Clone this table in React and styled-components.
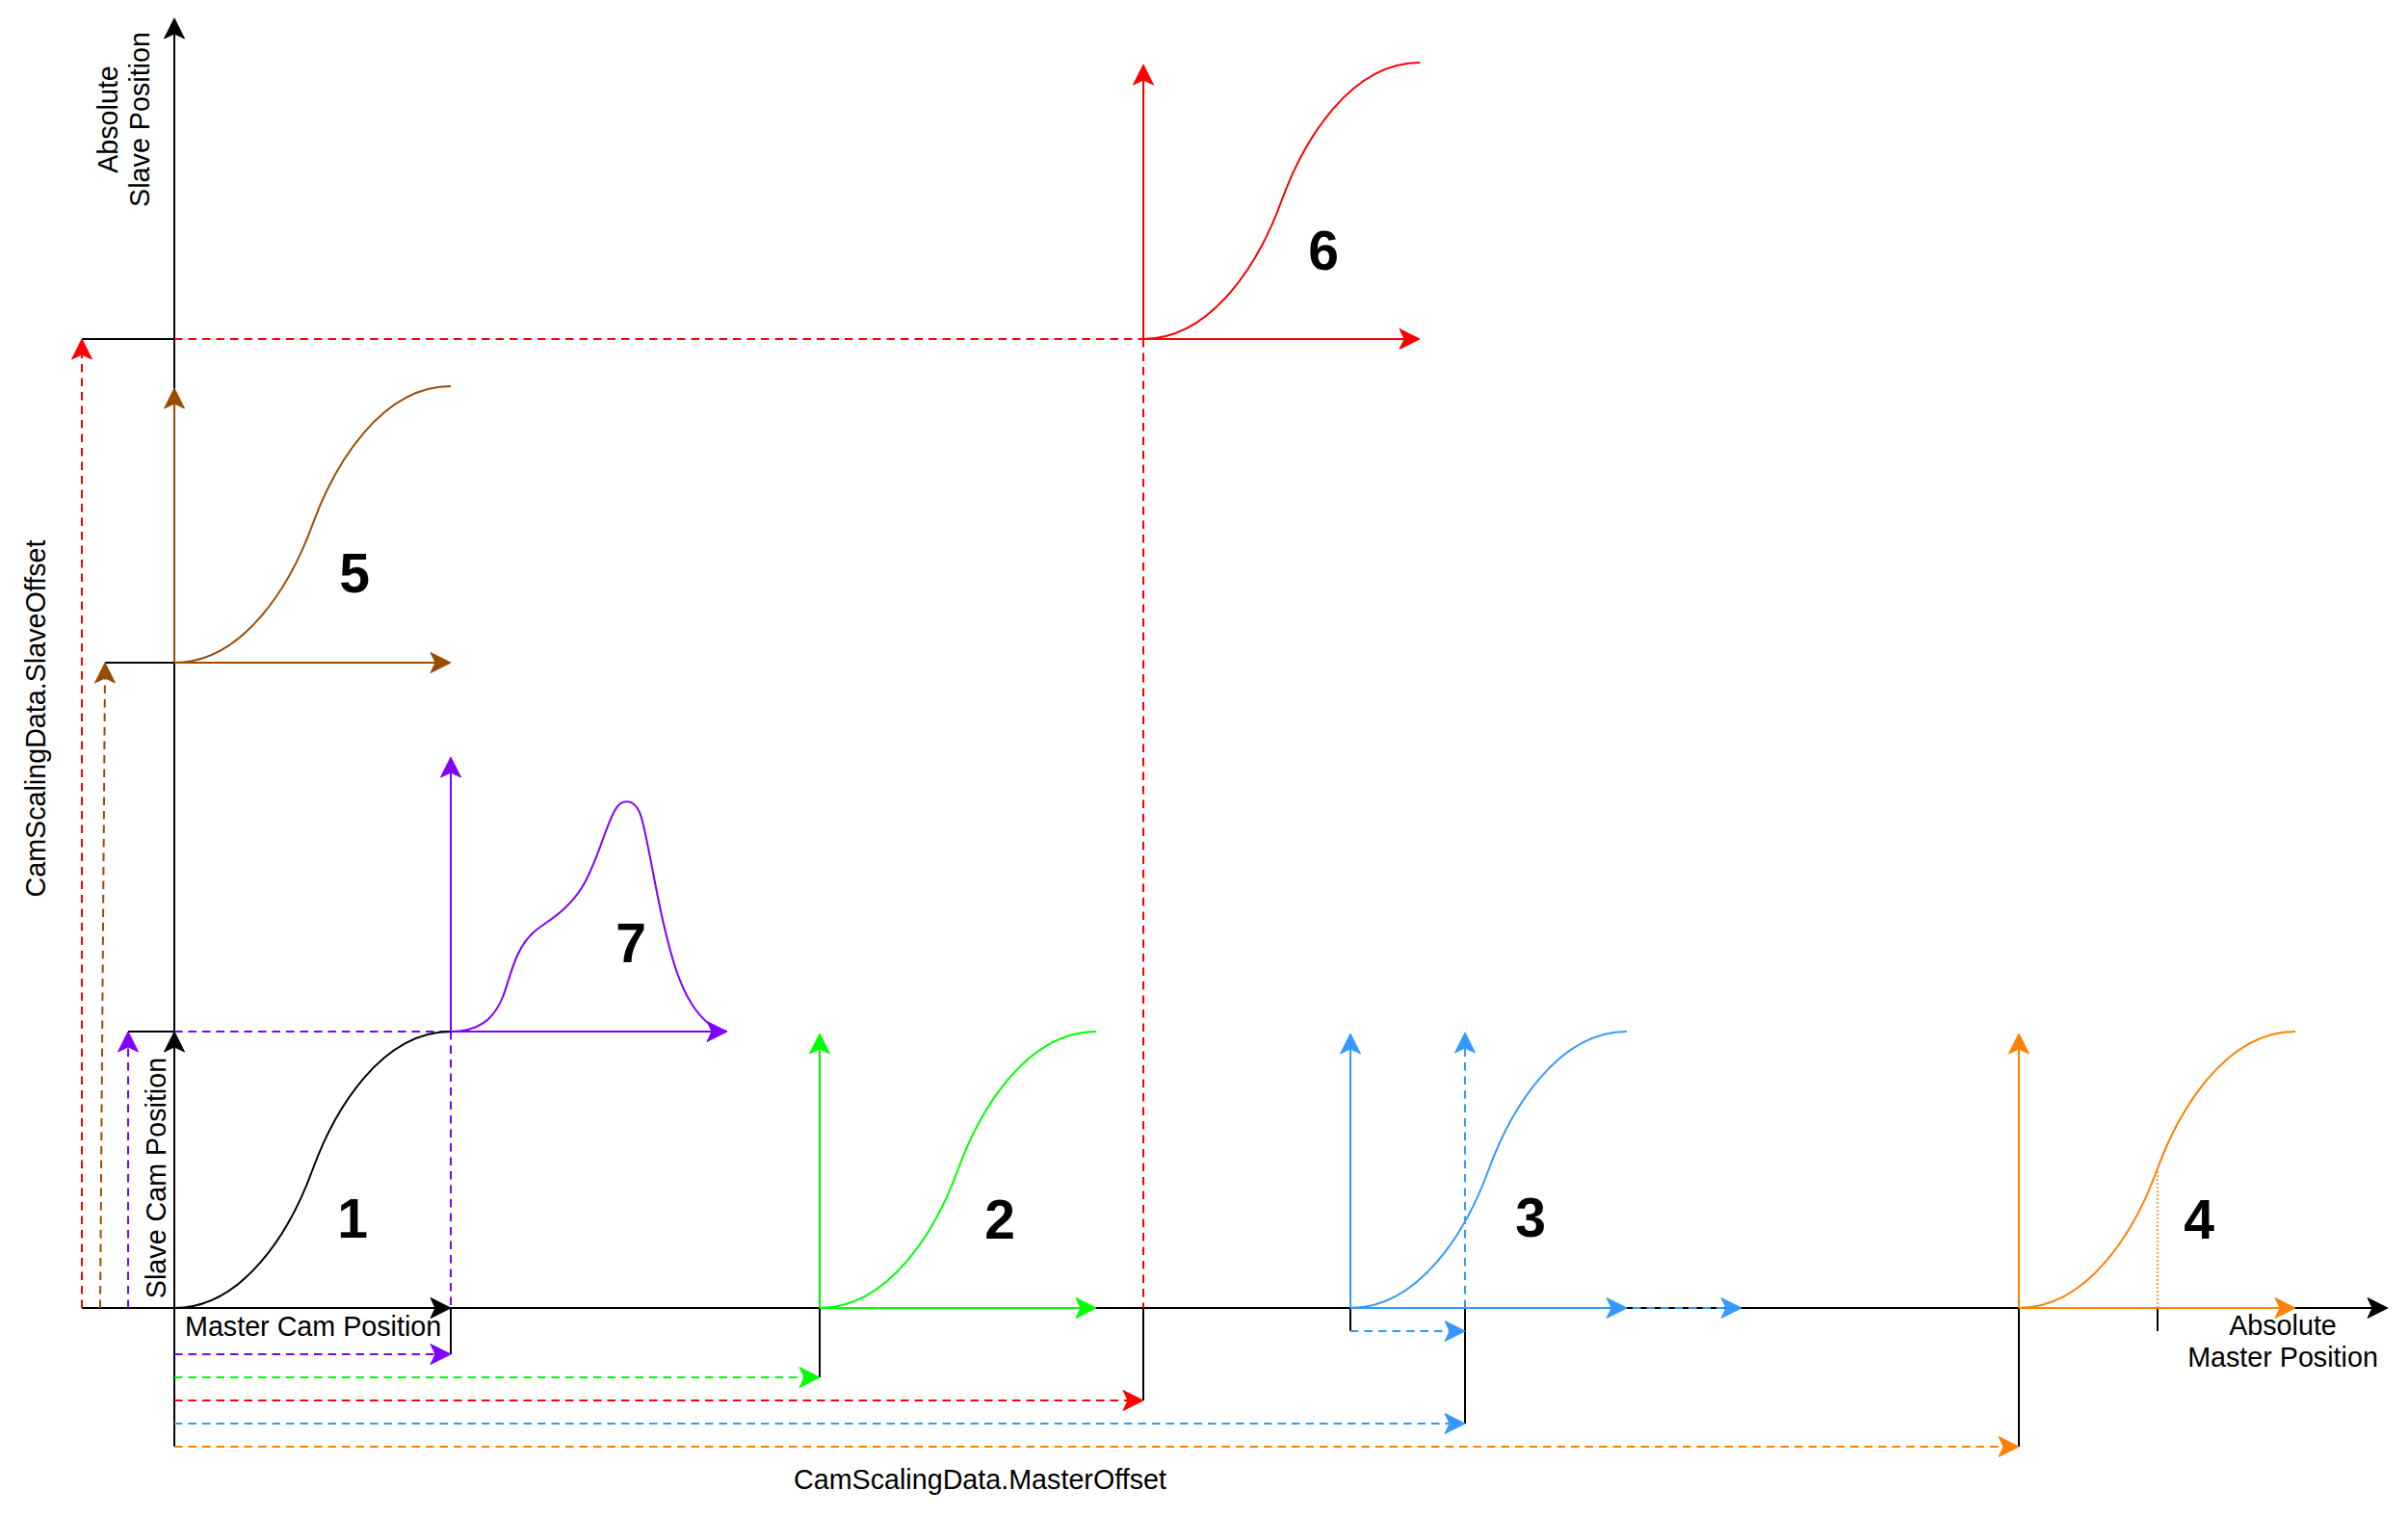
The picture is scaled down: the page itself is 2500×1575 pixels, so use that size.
import React from 'react';
import styled, { createGlobalStyle } from 'styled-components';

// colours of the seven cam cases (draw.io palette)
const BLACK = '#000000';
const RED = '#ff0000';
const GREEN = '#00ff00';
const BLUE = '#3399ff';
const ORANGE = '#ff8000';
const BROWN = '#994c00';
const PURPLE = '#7f00ff';

const DASH = '8.5 6';
const DOT = '2 2';

// every cam profile spans the same box
const CAM_W = 287;
const CAM_H = 287;

const GlobalStyle = createGlobalStyle`
  html, body {
    margin: 0;
    padding: 0;
    background: #ffffff;
  }
  body {
    font-family: 'Liberation Sans', Arial, sans-serif;
  }
`;

const Page = styled.div`
  width: 2500px;
  height: 1575px;
  background: #ffffff;
  overflow: hidden;
`;

const Diagram = styled.svg`
  display: block;
  width: 2500px;
  height: 1575px;
`;

const Label = styled.text`
  font-family: 'Liberation Sans', Arial, sans-serif;
  font-size: 28.7px;
  fill: #000000;
  text-anchor: ${(p) => p.$anchor || 'start'};
`;

const Numeral = styled.text`
  font-family: 'Liberation Sans', Arial, sans-serif;
  font-size: 57px;
  font-weight: 700;
  fill: #000000;
  text-anchor: middle;
`;

const Stroke = styled.path`
  fill: none;
  stroke: ${(p) => p.$color};
  stroke-width: ${(p) => p.$width || 2};
  stroke-dasharray: ${(p) => p.$dash || 'none'};
`;

const Head = styled.path`
  fill: ${(p) => p.$color};
  stroke: ${(p) => p.$color};
  stroke-width: 1;
  stroke-linejoin: miter;
`;

const HEADS = {
  right: 'M0,0 L-21,-10.5 L-16,0 L-21,10.5 Z',
  up: 'M0,0 L-10.5,21 L0,16 L10.5,21 Z',
};

const Arrowhead = ({ x, y, dir, color }) => (
  <Head d={HEADS[dir]} transform={`translate(${x},${y})`} $color={color} />
);

const Line = ({ from, to, color = BLACK, dash, width }) => (
  <Stroke d={`M${from[0]},${from[1]} L${to[0]},${to[1]}`} $color={color} $dash={dash} $width={width} />
);

// line ending in an arrowhead at `to`
const Arrow = ({ from, to, color = BLACK, dash }) => {
  const dir = to[1] === from[1] ? 'right' : 'up';
  const end = dir === 'right' ? [to[0] - 10, to[1]] : [to[0], to[1] + 10];
  return (
    <g>
      <Line from={from} to={end} color={color} dash={dash} />
      <Arrowhead x={to[0]} y={to[1]} dir={dir} color={color} />
    </g>
  );
};

const sCurve = (x, y, w = CAM_W, h = CAM_H) =>
  `M${x},${y} C${x + 0.25 * w},${y} ${x + 0.42 * w},${y - 0.28 * h} ${x + 0.5 * w},${y - 0.5 * h} ` +
  `C${x + 0.58 * w},${y - 0.72 * h} ${x + 0.75 * w},${y - h} ${x + w},${y - h}`;

const PEAK_CURVE =
  'M468,1071 C495,1071 512,1060 522,1035 C530,1015 534,985 555,967 C570,955 590,945 605,920 ' +
  'C620,895 628,860 638,842 C645,828 660,828 666,849 C672,870 680,920 688,955 ' +
  'C696,990 705,1025 722,1048 C732,1062 742,1069 755,1071';

// a cam profile drawn in its own little coordinate system
const CamPlot = ({ x, y, color, curve, axes = true }) => (
  <g>
    {axes && <Arrow from={[x, y]} to={[x, y - CAM_H + 2]} color={color} />}
    {axes && <Arrow from={[x, y]} to={[x + CAM_W, y]} color={color} />}
    <Stroke d={curve || sCurve(x, y)} $color={color} />
  </g>
);

const AXIS_Y = 1358;
const AXIS_X = 181;

// black stubs that drop from the master axis to each offset arrow
const DROPS = [
  [468, 1406],
  [851, 1430],
  [1187, 1454],
  [1402, 1382],
  [1521, 1478],
  [2096, 1502],
  [2240, 1382],
];

// offset arrows below the master axis
const MASTER_OFFSETS = [
  { y: 1406, x: 468, color: PURPLE },
  { y: 1430, x: 851, color: GREEN },
  { y: 1454, x: 1187, color: RED },
  { y: 1478, x: 1521, color: BLUE },
  { y: 1502, x: 2096, color: ORANGE },
];

const NUMERALS = [
  { n: '1', x: 366, y: 1264 },
  { n: '2', x: 1038, y: 1265 },
  { n: '3', x: 1589, y: 1263 },
  { n: '4', x: 2283, y: 1265 },
  { n: '5', x: 368, y: 594 },
  { n: '6', x: 1374, y: 259 },
  { n: '7', x: 655, y: 978 },
];

const Vertical = ({ x, y, children }) => (
  <Label x={0} y={0} $anchor="middle" transform={`translate(${x},${y}) rotate(-90)`}>
    {children}
  </Label>
);

const App = () => (
  <Page>
    <GlobalStyle />
    <Diagram viewBox="0 0 2500 1575" xmlns="http://www.w3.org/2000/svg">
      {/* main axes */}
      <Arrow from={[AXIS_X, 1502]} to={[AXIS_X, 19]} />
      <Arrow from={[85, AXIS_Y]} to={[2479, AXIS_Y]} />
      <Arrowhead x={468} y={AXIS_Y} dir="right" color={BLACK} />
      <Arrowhead x={AXIS_X} y={1071} dir="up" color={BLACK} />

      {/* slave offset stubs */}
      <Line from={[85, 352]} to={[AXIS_X, 352]} />
      <Line from={[109, 688]} to={[AXIS_X, 688]} />
      <Line from={[133, 1071]} to={[AXIS_X, 1071]} />

      {DROPS.map(([x, y]) => (
        <Line key={`${x}-${y}`} from={[x, AXIS_Y]} to={[x, y]} />
      ))}

      {/* slave offsets */}
      <Arrow from={[85, AXIS_Y]} to={[85, 352]} color={RED} dash={DASH} />
      <Arrowhead x={109} y={688} dir="up" color={BROWN} />
      <Line from={[104, AXIS_Y]} to={[109, 698]} color={BROWN} dash={DASH} />
      <Arrow from={[133, AXIS_Y]} to={[133, 1071]} color={PURPLE} dash={DASH} />

      {/* projection lines */}
      <Line from={[AXIS_X, 352]} to={[1187, 352]} color={RED} dash={DASH} />
      <Line from={[1187, 352]} to={[1187, AXIS_Y]} color={RED} dash={DASH} />
      <Line from={[AXIS_X, 1071]} to={[468, 1071]} color={PURPLE} dash={DASH} />
      <Line from={[468, 1071]} to={[468, AXIS_Y]} color={PURPLE} dash={DASH} />

      {/* master offsets */}
      {MASTER_OFFSETS.map((o) => (
        <Arrow key={o.y} from={[AXIS_X, o.y]} to={[o.x, o.y]} color={o.color} dash={DASH} />
      ))}
      <Arrow from={[1402, 1382]} to={[1521, 1382]} color={BLUE} dash={DASH} />

      {/* cam profiles */}
      <CamPlot x={AXIS_X} y={AXIS_Y} color={BLACK} axes={false} />
      <CamPlot x={851} y={AXIS_Y} color={GREEN} />
      <CamPlot x={1402} y={AXIS_Y} color={BLUE} />
      <Arrow from={[1521, AXIS_Y]} to={[1521, 1072]} color={BLUE} dash={DASH} />
      <Arrow from={[1521, AXIS_Y]} to={[1808, AXIS_Y]} color={BLUE} dash={DASH} />
      <CamPlot x={2096} y={AXIS_Y} color={ORANGE} />
      <Line from={[2240, AXIS_Y]} to={[2240, 1215]} color={ORANGE} dash={DOT} width={1.5} />
      <CamPlot x={AXIS_X} y={688} color={BROWN} />
      <CamPlot x={1187} y={352} color={RED} />
      <CamPlot x={468} y={1071} color={PURPLE} curve={PEAK_CURVE} />

      {NUMERALS.map((d) => (
        <Numeral key={d.n} x={d.x} y={d.y + 20.5}>
          {d.n}
        </Numeral>
      ))}

      {/* axis labels */}
      <Vertical x={122} y={124}>Absolute</Vertical>
      <Vertical x={155} y={124}>Slave Position</Vertical>
      <Vertical x={47} y={746}>CamScalingData.SlaveOffset</Vertical>
      <Vertical x={172} y={1223}>Slave Cam Position</Vertical>
      <Label x={192} y={1387}>Master Cam Position</Label>
      <Label x={824} y={1546}>CamScalingData.MasterOffset</Label>
      <Label x={2370} y={1386} $anchor="middle">Absolute</Label>
      <Label x={2370} y={1419} $anchor="middle">Master Position</Label>
    </Diagram>
  </Page>
);

export default App;
